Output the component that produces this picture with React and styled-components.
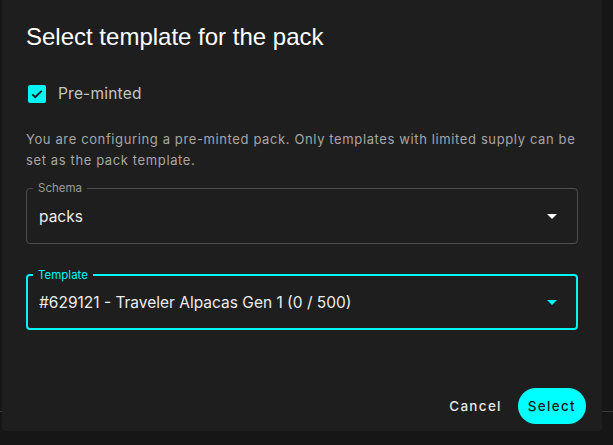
import styled, { createGlobalStyle } from "styled-components"

const GlobalStyle = createGlobalStyle`
  html, body {
    margin: 0;
    padding: 0;
    background: linear-gradient(to bottom, #161616 0, #161616 411px, #3a3a3a 411px, #3a3a3a 412px, #161616 412px);
    font-family: Inter, "Liberation Sans", sans-serif;
  }
`

function ArrowDropDown({ color }) {
  return (
    <svg width="24" height="24" viewBox="0 0 24 24" fill={color}>
      <path d="M7 10l5 5 5-5z" />
    </svg>
  )
}

function SelectField({ label, value, focused }) {
  return (
    <Field focused={focused}>
      <Legend focused={focused}>{label}</Legend>
      <Value>{value}</Value>
      <ArrowDropDown color={focused ? "#00f5f5" : "#ffffff"} />
    </Field>
  )
}

export default function App() {
  return (
    <>
      <GlobalStyle />
      <Page>
        <Dialog>
          <Title>Select template for the pack</Title>
          <CheckRow>
            <CheckBox>
              <svg width="14" height="14" viewBox="0 0 24 24">
                <path d="M4 12.5l5 5L20 6.5" fill="none" stroke="#1b1b1b" strokeWidth="3.2" />
              </svg>
            </CheckBox>
            <CheckLabel>Pre-minted</CheckLabel>
          </CheckRow>
          <Hint>
            You are configuring a pre-minted pack. Only templates with limited supply can be set as the pack
            template.
          </Hint>
          <SelectField label="Schema" value="packs" />
          <SelectField label="Template" value="#629121 - Traveler Alpacas Gen 1 (0 / 500)" focused />
          <Actions>
            <TextButton>Cancel</TextButton>
            <PillButton>Select</PillButton>
          </Actions>
        </Dialog>
      </Page>
    </>
  )
}

const Page = styled.div`
  width: 613px;
  height: 445px;
  padding-left: 2px;
  box-sizing: border-box;
`

const Dialog = styled.div`
  width: 600px;
  height: 431px;
  box-sizing: border-box;
  background: #1e1e1e;
  border-radius: 0 0 4px 4px;
  padding: 21px 24px 0;
  display: flex;
  flex-direction: column;
`

const Title = styled.h2`
  margin: 0;
  font-family: "Liberation Sans", Arial, sans-serif;
  font-weight: 400;
  font-size: 24px;
  line-height: 32px;
  color: #ffffff;
`

const CheckRow = styled.div`
  display: flex;
  align-items: center;
  gap: 12px;
  margin-top: 31px;
  padding-left: 2px;
`

const CheckBox = styled.span`
  width: 18px;
  height: 18px;
  border-radius: 2px;
  background: #00f5f5;
  display: flex;
  align-items: center;
  justify-content: center;
`

const CheckLabel = styled.span`
  font-size: 15.5px;
  color: #c4c4c4;
  letter-spacing: 0.2px;
`

const Hint = styled.p`
  margin: 26px 0 0;
  font-size: 13px;
  line-height: 21px;
  color: #a6a6a6;
  letter-spacing: 0.62px;
`

const Field = styled.div`
  position: relative;
  height: 56px;
  box-sizing: border-box;
  margin-top: ${(p) => (p.focused ? "30px" : "17px")};
  border: ${(p) => (p.focused ? "2px solid #00f5f5" : "1px solid #4e4e4e")};
  border-radius: 4px;
  display: flex;
  align-items: center;
  padding: 0 ${(p) => (p.focused ? "12px" : "13px")} 0 ${(p) => (p.focused ? "11px" : "12px")};
  gap: 8px;
`

const Legend = styled.span`
  position: absolute;
  top: -8px;
  left: ${(p) => (p.focused ? "5px" : "6px")};
  padding: 0 5px;
  background: #1e1e1e;
  font-size: 11.5px;
  line-height: 14px;
  color: ${(p) => (p.focused ? "#00f5f5" : "#9a9a9a")};
`

const Value = styled.span`
  flex: 1;
  font-size: 15.5px;
  color: #ececec;
`

const Actions = styled.div`
  margin-top: auto;
  margin-bottom: 7px;
  margin-right: -8px;
  display: flex;
  justify-content: flex-end;
  align-items: center;
  gap: 8px;
`

const TextButton = styled.button`
  border: none;
  background: none;
  font-family: Inter, "Liberation Sans", sans-serif;
  font-size: 13.5px;
  font-weight: 500;
  letter-spacing: 1.3px;
  color: #e6e6e6;
  padding: 0 8px;
  height: 36px;
`

const PillButton = styled.button`
  border: none;
  background: #00ffff;
  color: #1a1a1a;
  font-family: Inter, "Liberation Sans", sans-serif;
  font-size: 13.5px;
  font-weight: 500;
  letter-spacing: 1.3px;
  height: 36px;
  padding: 0 10px;
  border-radius: 18px;
`
